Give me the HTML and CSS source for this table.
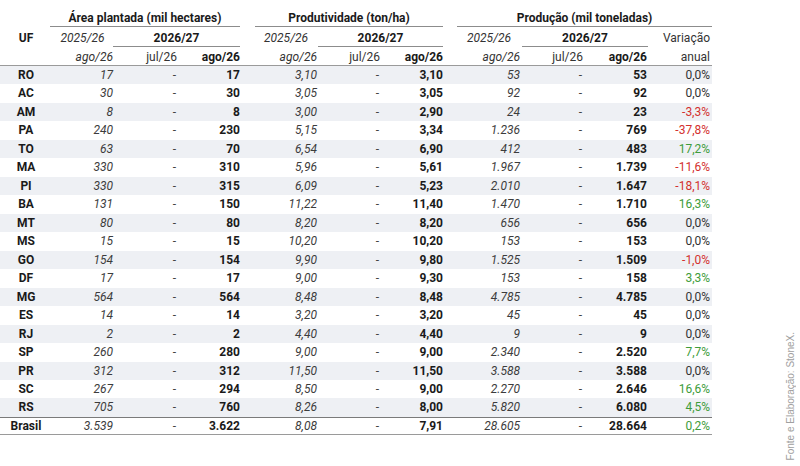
FILE: index.html
```html
<!DOCTYPE html>
<html lang="pt-BR">
<head>
<meta charset="utf-8">
<title>Estimativas</title>
<link rel="stylesheet" href="styles.css">
</head>
<body>
<div class="page">
  <table class="t">
    <colgroup>
      <col class="w-uf"><col class="w-a"><col class="w-b"><col class="w-a">
      <col class="w-c"><col class="w-a"><col class="w-a">
      <col class="w-c"><col class="w-a"><col class="w-b"><col class="w-a">
    </colgroup>
    <thead>
      <tr class="h1">
        <th></th>
        <th colspan="3"><div class="grp grp-a">Área plantada (mil hectares)</div></th>
        <th colspan="3"><div class="grp grp-p">Produtividade (ton/ha)</div></th>
        <th colspan="4"><div class="grp grp-r">Produção (mil toneladas)</div></th>
      </tr>
      <tr class="h2">
        <th class="uf">UF</th>
        <th class="old">2025/26</th>
        <th colspan="2" class="yc"><div class="yr yr-a">2026/27</div></th>
        <th class="old inset">2025/26</th>
        <th colspan="2" class="yc"><div class="yr yr-p">2026/27</div></th>
        <th class="old inset">2025/26</th>
        <th colspan="2" class="yc"><div class="yr yr-r">2026/27</div></th>
        <th class="var">Variação</th>
      </tr>
      <tr class="h3">
        <th></th>
        <th class="o">ago/26</th><th class="j">jul/26</th><th class="n">ago/26</th>
        <th class="o">ago/26</th><th class="j">jul/26</th><th class="n">ago/26</th>
        <th class="o">ago/26</th><th class="j">jul/26</th><th class="n">ago/26</th>
        <th class="var">anual</th>
      </tr>
    </thead>
    <tbody>
      <tr><td class="uf">RO</td><td class="o">17</td><td class="j">-</td><td class="n">17</td><td class="o">3,10</td><td class="j">-</td><td class="n">3,10</td><td class="o">53</td><td class="j">-</td><td class="n">53</td><td class="v">0,0%</td></tr>
      <tr><td class="uf">AC</td><td class="o">30</td><td class="j">-</td><td class="n">30</td><td class="o">3,05</td><td class="j">-</td><td class="n">3,05</td><td class="o">92</td><td class="j">-</td><td class="n">92</td><td class="v">0,0%</td></tr>
      <tr><td class="uf">AM</td><td class="o">8</td><td class="j">-</td><td class="n">8</td><td class="o">3,00</td><td class="j">-</td><td class="n">2,90</td><td class="o">24</td><td class="j">-</td><td class="n">23</td><td class="v neg">-3,3%</td></tr>
      <tr><td class="uf">PA</td><td class="o">240</td><td class="j">-</td><td class="n">230</td><td class="o">5,15</td><td class="j">-</td><td class="n">3,34</td><td class="o">1.236</td><td class="j">-</td><td class="n">769</td><td class="v neg">-37,8%</td></tr>
      <tr><td class="uf">TO</td><td class="o">63</td><td class="j">-</td><td class="n">70</td><td class="o">6,54</td><td class="j">-</td><td class="n">6,90</td><td class="o">412</td><td class="j">-</td><td class="n">483</td><td class="v pos">17,2%</td></tr>
      <tr><td class="uf">MA</td><td class="o">330</td><td class="j">-</td><td class="n">310</td><td class="o">5,96</td><td class="j">-</td><td class="n">5,61</td><td class="o">1.967</td><td class="j">-</td><td class="n">1.739</td><td class="v neg">-11,6%</td></tr>
      <tr><td class="uf">PI</td><td class="o">330</td><td class="j">-</td><td class="n">315</td><td class="o">6,09</td><td class="j">-</td><td class="n">5,23</td><td class="o">2.010</td><td class="j">-</td><td class="n">1.647</td><td class="v neg">-18,1%</td></tr>
      <tr><td class="uf">BA</td><td class="o">131</td><td class="j">-</td><td class="n">150</td><td class="o">11,22</td><td class="j">-</td><td class="n">11,40</td><td class="o">1.470</td><td class="j">-</td><td class="n">1.710</td><td class="v pos">16,3%</td></tr>
      <tr><td class="uf">MT</td><td class="o">80</td><td class="j">-</td><td class="n">80</td><td class="o">8,20</td><td class="j">-</td><td class="n">8,20</td><td class="o">656</td><td class="j">-</td><td class="n">656</td><td class="v">0,0%</td></tr>
      <tr><td class="uf">MS</td><td class="o">15</td><td class="j">-</td><td class="n">15</td><td class="o">10,20</td><td class="j">-</td><td class="n">10,20</td><td class="o">153</td><td class="j">-</td><td class="n">153</td><td class="v">0,0%</td></tr>
      <tr><td class="uf">GO</td><td class="o">154</td><td class="j">-</td><td class="n">154</td><td class="o">9,90</td><td class="j">-</td><td class="n">9,80</td><td class="o">1.525</td><td class="j">-</td><td class="n">1.509</td><td class="v neg">-1,0%</td></tr>
      <tr><td class="uf">DF</td><td class="o">17</td><td class="j">-</td><td class="n">17</td><td class="o">9,00</td><td class="j">-</td><td class="n">9,30</td><td class="o">153</td><td class="j">-</td><td class="n">158</td><td class="v pos">3,3%</td></tr>
      <tr><td class="uf">MG</td><td class="o">564</td><td class="j">-</td><td class="n">564</td><td class="o">8,48</td><td class="j">-</td><td class="n">8,48</td><td class="o">4.785</td><td class="j">-</td><td class="n">4.785</td><td class="v">0,0%</td></tr>
      <tr><td class="uf">ES</td><td class="o">14</td><td class="j">-</td><td class="n">14</td><td class="o">3,20</td><td class="j">-</td><td class="n">3,20</td><td class="o">45</td><td class="j">-</td><td class="n">45</td><td class="v">0,0%</td></tr>
      <tr><td class="uf">RJ</td><td class="o">2</td><td class="j">-</td><td class="n">2</td><td class="o">4,40</td><td class="j">-</td><td class="n">4,40</td><td class="o">9</td><td class="j">-</td><td class="n">9</td><td class="v">0,0%</td></tr>
      <tr><td class="uf">SP</td><td class="o">260</td><td class="j">-</td><td class="n">280</td><td class="o">9,00</td><td class="j">-</td><td class="n">9,00</td><td class="o">2.340</td><td class="j">-</td><td class="n">2.520</td><td class="v pos">7,7%</td></tr>
      <tr><td class="uf">PR</td><td class="o">312</td><td class="j">-</td><td class="n">312</td><td class="o">11,50</td><td class="j">-</td><td class="n">11,50</td><td class="o">3.588</td><td class="j">-</td><td class="n">3.588</td><td class="v">0,0%</td></tr>
      <tr><td class="uf">SC</td><td class="o">267</td><td class="j">-</td><td class="n">294</td><td class="o">8,50</td><td class="j">-</td><td class="n">9,00</td><td class="o">2.270</td><td class="j">-</td><td class="n">2.646</td><td class="v pos">16,6%</td></tr>
      <tr><td class="uf">RS</td><td class="o">705</td><td class="j">-</td><td class="n">760</td><td class="o">8,26</td><td class="j">-</td><td class="n">8,00</td><td class="o">5.820</td><td class="j">-</td><td class="n">6.080</td><td class="v pos">4,5%</td></tr>
      <tr class="total"><td class="uf">Brasil</td><td class="o">3.539</td><td class="j">-</td><td class="n">3.622</td><td class="o">8,08</td><td class="j">-</td><td class="n">7,91</td><td class="o">28.605</td><td class="j">-</td><td class="n">28.664</td><td class="v pos">0,2%</td></tr>
    </tbody>
  </table>
  <div class="source">Fonte e Elaboração: StoneX.</div>
</div>
</body>
</html>
```

FILE: styles.css
```css
html, body {
  margin: 0;
  padding: 0;
  background: #ffffff;
}
.page {
  display: flex;
  width: 800px;
  height: 466px;
  font-family: Roboto, "Liberation Sans", sans-serif;
  font-size: 12px;
  color: #1a1a1a;
}
.t {
  flex: none;
  width: 712px;
  table-layout: fixed;
  border-collapse: separate;
  border-spacing: 0;
  align-self: flex-start;
}
.w-uf { width: 52px; }
.w-a { width: 63px; }
.w-b { width: 64px; }
.w-c { width: 77px; }

th, td {
  padding: 0 2px 0 0;
  text-align: right;
  white-space: nowrap;
  vertical-align: top;
}
th { font-weight: 400; }

.h1 th { padding-top: 10px; padding-right: 0; }
.grp {
  font-weight: 700;
  line-height: 16px;
  text-align: center;
  border-bottom: 1px solid #8c8c8c;
}
.grp-a { margin: 0 2px 0 -2px; }
.grp-p { margin: 0 2px 0 13px; }
.grp-r { margin: 0 0 0 12px; }

.h2 th { padding-top: 3px; line-height: 16px; }
.h2 th.uf { text-align: center; font-weight: 700; padding-right: 0; }
.h2 .old { text-align: center; font-style: italic; color: #333; }
.h2 .old.inset { padding-left: 13px; }
.h2 th.yc { padding-right: 0; }
.yr {
  font-weight: 700;
  text-align: center;
  border-bottom: 1px solid #8c8c8c;
}
.yr-a { margin: 0 2px 0 -2px; }
.yr-p { margin: 0 2px 0 -1px; }
.yr-r { margin: 0 1px 0 0; }
.var { color: #333; }

.h3 th {
  padding-top: 3px;
  line-height: 15px;
  border-bottom: 1px solid #9a9a9a;
}
.h3 .o { font-style: italic; color: #333; }
.h3 .j { color: #333; }
.h3 .n { font-weight: 700; }

tbody td { line-height: 18.47px; }
tbody tr:nth-child(odd) td { background: #eef0f4; }
td.uf { text-align: center; font-weight: 700; padding-right: 0; }
td.o { font-style: italic; color: #3c3c3c; }
td.j { color: #444; padding-right: 3px; }
td.n { font-weight: 700; }
td.v { color: #333; }
td.neg { color: #d3302e; }
td.pos { color: #3e9c3a; }

tr.total td {
  line-height: 16px;
  border-top: 1px solid #7a7a7a;
  border-bottom: 1px solid #9a9a9a;
}

.source {
  margin-left: auto;
  margin-right: 3px;
  margin-bottom: 6px;
  align-self: flex-end;
  writing-mode: vertical-rl;
  transform: rotate(180deg);
  font-family: "Liberation Sans", Arial, sans-serif;
  font-size: 10px;
  line-height: 12px;
  color: #a0a0a0;
}
```
